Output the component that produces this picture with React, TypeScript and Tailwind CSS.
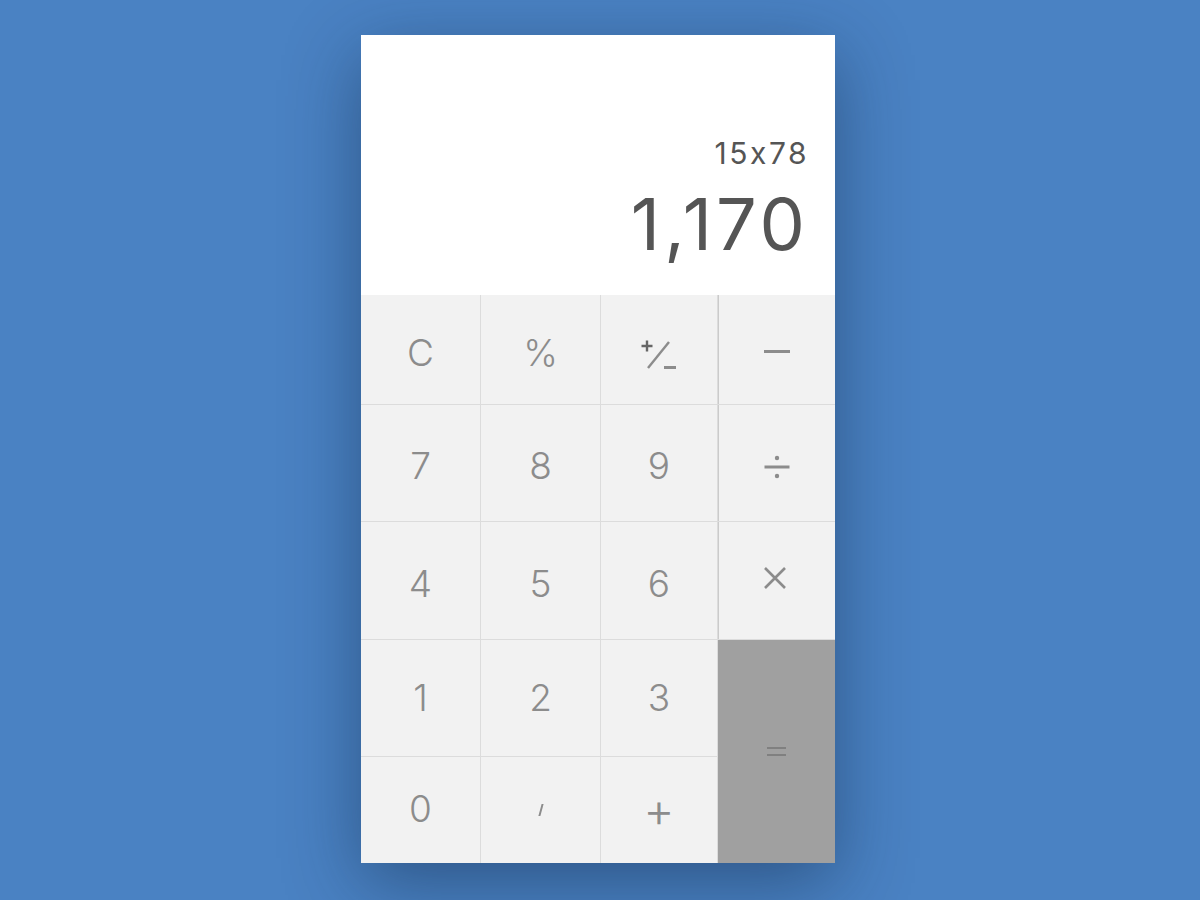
import React from 'react';

const cell = 'flex items-center justify-center bg-[#f2f2f2] text-[37px] font-light text-[#8c8c8c]';

function PlusMinus() {
  return (
    <svg width="40" height="36" viewBox="0 0 40 36" className="mt-[2px] ml-[2px]">
      <path d="M1.5 10H12.5M7 4.5V15.5" stroke="#666" strokeWidth="2.4" />
      <path d="M8 32L29 6" stroke="#8c8c8c" strokeWidth="2.4" />
      <rect x="24" y="30" width="12" height="3" fill="#8c8c8c" />
    </svg>
  );
}

function Divide() {
  return (
    <svg width="28" height="26" viewBox="0 0 28 26" className="mt-[2px]">
      <circle cx="14" cy="4" r="2.2" fill="#8c8c8c" />
      <rect x="1.5" y="11.5" width="25" height="3" fill="#8c8c8c" />
      <circle cx="14" cy="22" r="2.2" fill="#8c8c8c" />
    </svg>
  );
}

function Times() {
  return (
    <svg width="24" height="24" viewBox="0 0 24 24" className="mb-[6px] mr-[3px]">
      <path d="M2 2L22 22M22 2L2 22" stroke="#8c8c8c" strokeWidth="2.6" />
    </svg>
  );
}

export default function App() {
  const keys: { label: React.ReactNode; cls?: string }[] = [
    { label: 'C', cls: 'pt-[6px]' },
    { label: '%', cls: 'pt-[6px]' },
    { label: <PlusMinus />, cls: 'pt-[6px]' },
    { label: <span className="block h-[3px] w-[26px] bg-[#8c8c8c]" />, cls: 'pt-[3px] shadow-[inset_1px_0_0_#cbcbcb]' },
    { label: '7', cls: 'pt-[5px]' },
    { label: '8', cls: 'pt-[5px]' },
    { label: '9', cls: 'pt-[5px]' },
    { label: <Divide />, cls: 'pt-[5px] shadow-[inset_1px_0_0_#cbcbcb]' },
    { label: '4', cls: 'pt-[6px]' },
    { label: '5', cls: 'pt-[6px]' },
    { label: '6', cls: 'pt-[6px]' },
    { label: <Times />, cls: 'shadow-[inset_1px_0_0_#cbcbcb]' },
    { label: '1' },
    { label: '2' },
    { label: '3' },
  ];

  return (
    <main className="flex min-h-screen justify-center bg-[#4a82c3] pt-[35px] pr-[4px] font-['Inter',sans-serif]">
      <div className="flex h-[828px] w-[474px] flex-col shadow-[0_20px_70px_rgba(10,30,60,0.45)]">
        <div className="flex h-[260px] flex-col items-end justify-end bg-white pr-[26px] pb-[35px] text-[#555555]">
          <div className="text-[30px] leading-none tracking-[2.5px]">15x78</div>
          <div className="mt-[20px] text-[72px] leading-none tracking-[4px]">1,170</div>
        </div>
        <div className="grid flex-1 grid-cols-[119px_119px_116px_117px] grid-rows-[109px_116px_117px_116px_106px] gap-px bg-[#dcdcdc]">
          {keys.map((k, i) => (
            <div key={i} className={`${cell} ${k.cls ?? ''}`}>
              {k.label}
            </div>
          ))}
          <div className="col-start-4 row-span-2 row-start-4 flex items-center justify-center bg-[#a0a0a0]">
            <span className="flex flex-col gap-[5px]">
              <span className="block h-[2px] w-[19px] bg-[#808080]" />
              <span className="block h-[2px] w-[19px] bg-[#808080]" />
            </span>
          </div>
          <div className={`${cell} pb-[2px]`}>0</div>
          <div className={`${cell} text-[28px]`}>
            <span className="block h-[12px] w-[2px] skew-x-[-15deg] bg-[#8c8c8c]" />
          </div>
          <div className={`${cell} text-[48px]`}>+</div>
        </div>
      </div>
    </main>
  );
}
